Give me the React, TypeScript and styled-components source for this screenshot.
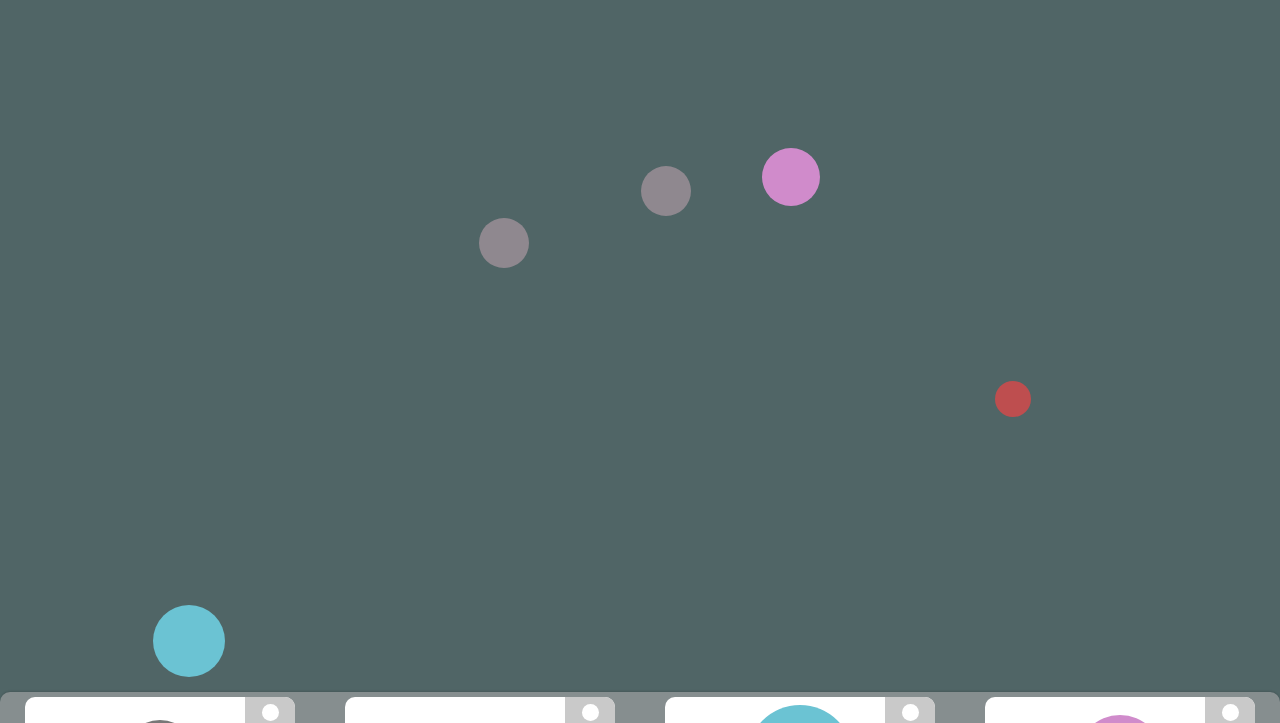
import React from 'react';
import styled, { createGlobalStyle } from 'styled-components';

const GlobalStyle = createGlobalStyle`
    html, body { margin: 0; padding: 0; }
    body { font-family: 'Liberation Sans', Arial, sans-serif; background: #506566; overflow: hidden; }
`;

type Ball = { x: number; y: number; r: number; color: string };

const balls: Ball[] = [
    { x: 189, y: 641, r: 36, color: '#6bc3d3' },
    { x: 504, y: 243, r: 25, color: '#8f888f' },
    { x: 666, y: 191, r: 25, color: '#8f888f' },
    { x: 791, y: 177, r: 29, color: '#d08bcb' },
    { x: 1013, y: 399, r: 18, color: '#be4e4f' },
];

const slots: { color?: string; size: number }[] = [
    { color: '#777777', size: 76 },
    { size: 0 },
    { color: '#6bc3d3', size: 106 },
    { color: '#d08bcb', size: 86 },
];

export default function App() {
    return (
        <Page>
            <GlobalStyle />
            <Canvas>
                {balls.map((b, i) => (
                    <Dot
                        key={i}
                        $color={b.color}
                        style={{ left: b.x - b.r, top: b.y - b.r, width: b.r * 2, height: b.r * 2 }}
                    />
                ))}
            </Canvas>
            <Tray>
                {slots.map((s, i) => (
                    <Card key={i}>
                        <Preview>
                            {s.color && <PreviewBall $color={s.color} $size={s.size} />}
                        </Preview>
                        <Side>
                            <Knob />
                        </Side>
                    </Card>
                ))}
            </Tray>
        </Page>
    );
}

const Page = styled.div`
    width: 100vw; height: 100vh;
    display: flex; flex-direction: column;
    overflow: hidden;
    background: #506566;
`;

const Canvas = styled.div`
    position: relative;
    height: 692px; flex: none;
`;

const Dot = styled.div<{ $color: string }>`
    position: absolute;
    border-radius: 50%;
    background: ${({ $color }) => $color};
`;

const Tray = styled.div`
    flex: none;
    height: 140px;
    background: #868e8f;
    border-radius: 10px 10px 0 0;
    box-shadow: 0 -1px 2px rgba(0, 0, 0, 0.12);
    padding: 5px 25px 0;
    display: flex; gap: 50px;
    box-sizing: border-box;
`;

const Card = styled.div`
    width: 270px; height: 122px;
    background: #ffffff;
    border-radius: 10px;
    display: flex;
    overflow: hidden;
`;

const Preview = styled.div`
    flex: 1;
    display: flex; align-items: center; justify-content: center;
    padding-left: 50px;
`;

const PreviewBall = styled.div<{ $color: string; $size: number }>`
    width: ${({ $size }) => $size}px; height: ${({ $size }) => $size}px;
    border-radius: 50%;
    background: ${({ $color }) => $color};
    flex: none;
`;

const Side = styled.div`
    width: 50px;
    background: #c9c9c9;
    display: flex; justify-content: center; align-items: flex-start;
    padding-top: 7px;
    box-sizing: border-box;
`;

const Knob = styled.div`
    width: 17px; height: 17px;
    border-radius: 50%;
    background: #ffffff;
`;
